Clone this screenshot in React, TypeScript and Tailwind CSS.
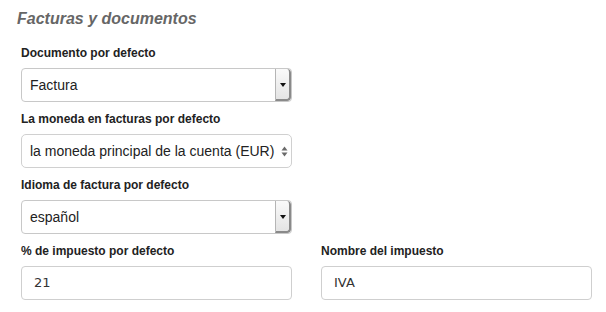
import React from "react";

const sans = { fontFamily: '"Liberation Sans", Arial, sans-serif' };

function PopupSelect({ value }: { value: string }) {
  return (
    <div className="flex h-[34px] w-[271px] overflow-hidden rounded-[4px] border border-[#c8c8c8] bg-white">
      <div className="flex flex-1 items-center pl-[8px] text-[14px] text-[#222]">{value}</div>
      <div className="flex w-[16px] items-center justify-center border-l border-[#b5b5b5] border-r-2 border-b-2 border-r-[#8a8a8a] border-b-[#8a8a8a] bg-gradient-to-b from-[#fafafa] to-[#e4e4e4] rounded-tr-[4px] rounded-br-[4px]">
        <svg width="6" height="4" viewBox="0 0 6 4" className="mt-[1px]">
          <path d="M0 0 L6 0 L3 4 Z" fill="#111" />
        </svg>
      </div>
    </div>
  );
}

function UpDownSelect({ value }: { value: string }) {
  return (
    <div className="flex h-[34px] w-[271px] items-center rounded-[5px] border border-[#d0d0d0] bg-white pl-[8px] pr-[3px]">
      <div className="flex-1 text-[14px] text-[#222]">{value}</div>
      <svg width="7" height="11" viewBox="0 0 7 11">
        <path d="M0.5 4.5 L6.5 4.5 L3.5 0.5 Z" fill="#6a6a6a" />
        <path d="M0.5 6.5 L6.5 6.5 L3.5 10.5 Z" fill="#6a6a6a" />
      </svg>
    </div>
  );
}

function TextInput({ value }: { value: string }) {
  return (
    <div
      className="flex h-[34px] w-[271px] items-center rounded-[4px] border border-[#cfcfcf] bg-white pl-[12px] text-[13px] text-[#333]"
      style={{ fontFamily: '"DejaVu Sans", Verdana, sans-serif' }}
    >
      {value}
    </div>
  );
}

function Label({ children }: { children: React.ReactNode }) {
  return <div className="mb-[7px] h-[16px] text-[12px] font-bold leading-[16px] text-[#222]">{children}</div>;
}

export default function App() {
  return (
    <div className="h-[312px] w-[606px] bg-white pt-[9px]" style={sans}>
      <div className="pl-[17px] text-[16px] font-bold italic leading-[20px] text-[#666]">Facturas y documentos</div>
      <div className="pl-[21px] pt-[16px]">
        <Label>Documento por defecto</Label>
        <PopupSelect value="Factura" />
        <div className="h-[9px]" />
        <Label>La moneda en facturas por defecto</Label>
        <UpDownSelect value="la moneda principal de la cuenta (EUR)" />
        <div className="h-[9px]" />
        <Label>Idioma de factura por defecto</Label>
        <PopupSelect value="español" />
        <div className="h-[9px]" />
        <div className="grid grid-cols-[271px_271px] gap-x-[29px]">
          <div>
            <Label>% de impuesto por defecto</Label>
            <TextInput value="21" />
          </div>
          <div>
            <Label>Nombre del impuesto</Label>
            <TextInput value="IVA" />
          </div>
        </div>
      </div>
    </div>
  );
}
